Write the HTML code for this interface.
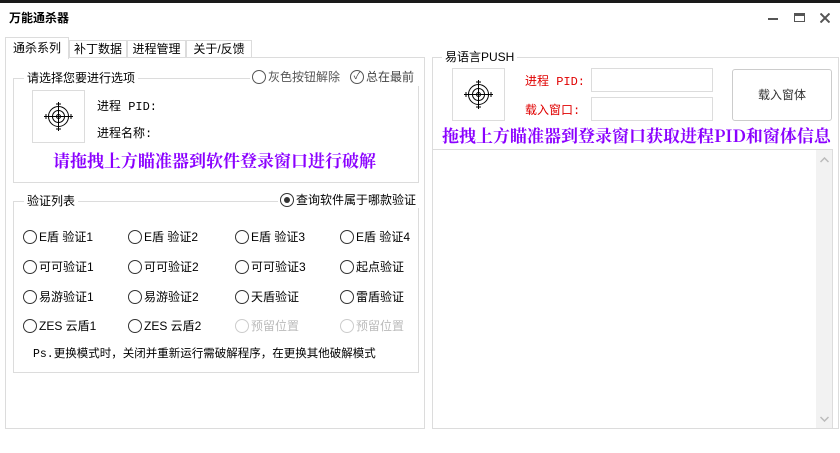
<!DOCTYPE html>
<html><head><meta charset="utf-8"><style>
*{box-sizing:border-box;margin:0;padding:0}
body{width:840px;height:453px;background:#fff;position:relative;overflow:hidden;font-family:"Liberation Sans","Noto Sans CJK SC",sans-serif;font-size:12px;color:#000}
.a{position:absolute;white-space:nowrap}
.bx{position:absolute;border:1px solid #dcdcdc}
.gt{position:absolute;background:#fff;padding:0 3px;line-height:14px;font-size:12px}
.rc{position:absolute;width:14px;height:14px;border:1px solid #333;border-radius:50%;background:#fff}
.rl{position:absolute;line-height:14px;font-size:12px}
.pu{position:absolute;color:#8a00ff;font-weight:bold;font-family:"Noto Serif CJK SC",serif;font-size:17px;white-space:nowrap;line-height:20px}
.mono{font-family:"Liberation Mono","Noto Sans CJK SC",monospace}
</style></head><body>
<div class="a" style="left:0;top:0;width:840px;height:3px;background:#1a1a1a"></div>
<div class="a" style="left:9px;top:9px;font-weight:bold;font-size:12px">万能通杀器</div>
<div class="a" style="left:768px;top:18px;width:10px;height:2px;background:#555"></div>
<div class="a" style="left:794px;top:13px;width:11px;height:9px;border:1px solid #555;border-top:3px solid #555"></div>
<svg class="a" style="left:820px;top:13px" width="10" height="10"><path d="M0.5 0.5L9.5 9.5M9.5 0.5L0.5 9.5" stroke="#555" stroke-width="2"/></svg>

<div class="bx" style="left:5px;top:57px;width:420px;height:372px"></div>
<div class="a" style="left:69px;top:40px;width:58px;height:18px;border:1px solid #dcdcdc;background:#fff;text-align:center;line-height:16px">补丁数据</div>
<div class="a" style="left:127px;top:40px;width:59px;height:18px;border:1px solid #dcdcdc;background:#fff;text-align:center;line-height:16px">进程管理</div>
<div class="a" style="left:186px;top:40px;width:66px;height:18px;border:1px solid #dcdcdc;background:#fff;text-align:center;line-height:16px">关于/反馈</div>
<div class="a" style="left:5px;top:37px;width:64px;height:22px;border:1px solid #dcdcdc;border-bottom:none;background:#fff;text-align:center;line-height:20px">通杀系列</div>

<div class="bx" style="left:13px;top:78px;width:406px;height:105px"></div>
<div class="gt" style="left:24px;top:71px">请选择您要进行选项</div>
<div class="a" style="left:250px;top:70px;width:170px;height:16px;background:#fff"></div>
<div class="rc" style="left:252px;top:70px;border-color:#555"></div><div class="rl" style="left:268px;top:70px;color:#555">灰色按钮解除</div>
<div class="rc" style="left:350px;top:70px;border-color:#555;font-size:10px;line-height:12px;text-align:center;color:#444">✓</div><div class="rl" style="left:366px;top:70px;color:#444">总在最前</div>
<div class="bx" style="left:32px;top:90px;width:53px;height:53px">
<svg width="51" height="51" viewBox="0 0 51 51"><g stroke="#000" fill="none" stroke-width="1"><circle cx="25.5" cy="25.5" r="10"/><circle cx="25.5" cy="25.5" r="6"/><circle cx="25.5" cy="25.5" r="2"/><path d="M11 25.5h29M25.5 11v29M13 23v5M38 23v5M23 13h5M23 38h5"/></g></svg></div>
<div class="a mono" style="left:97px;top:97px">进程 PID:</div>
<div class="a mono" style="left:97px;top:124px">进程名称:</div>
<div class="pu" style="left:53px;top:150px">请拖拽上方瞄准器到软件登录窗口进行破解</div>

<div class="bx" style="left:13px;top:201px;width:406px;height:172px"></div>
<div class="gt" style="left:24px;top:194px">验证列表</div>
<div class="a" style="left:278px;top:192px;width:142px;height:16px;background:#fff"></div>
<div class="rc" style="left:280px;top:193px"><div style="position:absolute;left:3px;top:3px;width:6px;height:6px;border-radius:50%;background:#333"></div></div>
<div class="rl" style="left:296px;top:193px">查询软件属于哪款验证</div>

<div class="rc" style="left:23px;top:230px"></div><div class="rl" style="left:39px;top:230px">E盾 验证1</div>
<div class="rc" style="left:128px;top:230px"></div><div class="rl" style="left:144px;top:230px">E盾 验证2</div>
<div class="rc" style="left:235px;top:230px"></div><div class="rl" style="left:251px;top:230px">E盾 验证3</div>
<div class="rc" style="left:340px;top:230px"></div><div class="rl" style="left:356px;top:230px">E盾 验证4</div>
<div class="rc" style="left:23px;top:260px"></div><div class="rl" style="left:39px;top:260px">可可验证1</div>
<div class="rc" style="left:128px;top:260px"></div><div class="rl" style="left:144px;top:260px">可可验证2</div>
<div class="rc" style="left:235px;top:260px"></div><div class="rl" style="left:251px;top:260px">可可验证3</div>
<div class="rc" style="left:340px;top:260px"></div><div class="rl" style="left:356px;top:260px">起点验证</div>
<div class="rc" style="left:23px;top:290px"></div><div class="rl" style="left:39px;top:290px">易游验证1</div>
<div class="rc" style="left:128px;top:290px"></div><div class="rl" style="left:144px;top:290px">易游验证2</div>
<div class="rc" style="left:235px;top:290px"></div><div class="rl" style="left:251px;top:290px">天盾验证</div>
<div class="rc" style="left:340px;top:290px"></div><div class="rl" style="left:356px;top:290px">雷盾验证</div>
<div class="rc" style="left:23px;top:319px"></div><div class="rl" style="left:39px;top:319px">ZES 云盾1</div>
<div class="rc" style="left:128px;top:319px"></div><div class="rl" style="left:144px;top:319px">ZES 云盾2</div>
<div class="rc" style="left:235px;top:319px;border-color:#ccc"></div><div class="rl" style="left:251px;top:319px;color:#bbb">预留位置</div>
<div class="rc" style="left:340px;top:319px;border-color:#ccc"></div><div class="rl" style="left:356px;top:319px;color:#bbb">预留位置</div>
<div class="a mono" style="left:33px;top:345px;font-size:11.5px">Ps.更换模式时，关闭并重新运行需破解程序，在更换其他破解模式</div>

<div class="bx" style="left:432px;top:57px;width:407px;height:372px"></div>
<div class="gt" style="left:442px;top:50px">易语言PUSH</div>
<div class="bx" style="left:452px;top:68px;width:53px;height:53px">
<svg width="51" height="51" viewBox="0 0 51 51"><g stroke="#000" fill="none" stroke-width="1"><circle cx="25.5" cy="25.5" r="10"/><circle cx="25.5" cy="25.5" r="6"/><circle cx="25.5" cy="25.5" r="2"/><path d="M11 25.5h29M25.5 11v29M13 23v5M38 23v5M23 13h5M23 38h5"/></g></svg></div>
<div class="a mono" style="left:525px;top:72px;color:#e00000">进程 PID:</div>
<div class="a mono" style="left:525px;top:101px;color:#e00000">载入窗口:</div>
<div class="bx" style="left:591px;top:68px;width:122px;height:24px"></div>
<div class="bx" style="left:591px;top:97px;width:122px;height:24px"></div>
<div class="a" style="left:732px;top:69px;width:100px;height:52px;border:1px solid #ccc;border-radius:3px;text-align:center;line-height:50px;color:#333">载入窗体</div>
<div class="pu" style="left:442px;top:125px">拖拽上方瞄准器到登录窗口获取进程PID和窗体信息</div>
<div class="bx" style="left:432px;top:149px;width:401px;height:280px"></div>
<div class="a" style="left:816px;top:150px;width:16px;height:278px;background:#f2f2f2"></div>
<svg class="a" style="left:820px;top:157px" width="9" height="6"><path d="M0.5 5L4.5 1L8.5 5" stroke="#bbb" fill="none" stroke-width="1.5"/></svg>
<svg class="a" style="left:820px;top:416px" width="9" height="6"><path d="M0.5 1L4.5 5L8.5 1" stroke="#bbb" fill="none" stroke-width="1.5"/></svg>
</body></html>
